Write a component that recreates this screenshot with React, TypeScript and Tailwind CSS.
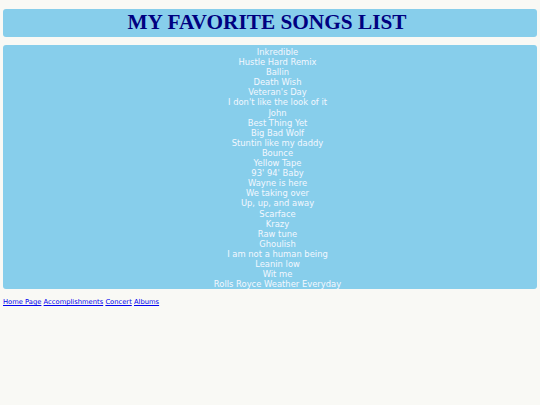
import React from "react";

const songs = [
  "Inkredible",
  "Hustle Hard Remix",
  "Ballin",
  "Death Wish",
  "Veteran's Day",
  "I don't like the look of it",
  "John",
  "Best Thing Yet",
  "Big Bad Wolf",
  "Stuntin like my daddy",
  "Bounce",
  "Yellow Tape",
  "93' 94' Baby",
  "Wayne is here",
  "We taking over",
  "Up, up, and away",
  "Scarface",
  "Krazy",
  "Raw tune",
  "Ghoulish",
  "I am not a human being",
  "Leanin low",
  "Wit me",
  "Rolls Royce Weather Everyday",
];

export default function App() {
  return (
    <div className="min-h-screen w-full bg-[#f9f9f5] px-[3px] pt-[9px]">
      <div className="flex h-[28px] items-center justify-center rounded-[3px] bg-[#87ceeb] pr-[6px]">
        <h1 className="text-[21.3px] font-bold leading-none text-[#000080] [font-family:'Liberation_Serif',serif]">
          MY FAVORITE SONGS LIST
        </h1>
      </div>
      <div className="mt-[8px] rounded-[3px] bg-[#87ceeb] pl-[15px] pt-[2px] text-center text-[8.4px] leading-[10.1px] text-[#f4f8ff] [font-family:'DejaVu_Sans',sans-serif]">
        {songs.map((s) => (
          <div key={s}>{s}</div>
        ))}
      </div>
      <div className="mt-[8px] text-[6.75px] leading-[10px] [font-family:'DejaVu_Sans',sans-serif]">
        <a href="#" className="text-[#0000ee] underline">Home Page</a>{" "}
        <a href="#" className="text-[#0000ee] underline">Accomplishments</a>{" "}
        <a href="#" className="text-[#0000ee] underline">Concert</a>{" "}
        <a href="#" className="text-[#0000ee] underline">Albums</a>
      </div>
    </div>
  );
}
